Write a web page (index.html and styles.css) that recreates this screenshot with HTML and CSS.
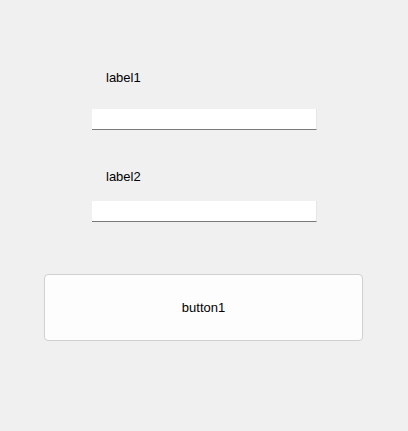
FILE: index.html
```html
<!DOCTYPE html>
<html>
<head>
<meta charset="utf-8">
<link rel="stylesheet" href="styles.css">
</head>
<body>
<div class="form">
  <div class="label label1">label1</div>
  <input class="textbox textbox1" type="text">
  <div class="label label2">label2</div>
  <input class="textbox textbox2" type="text">
  <button class="button">button1</button>
</div>
</body>
</html>
```
FILE: styles.css
```css
html, body {
  margin: 0;
  padding: 0;
  background: #f0f0f0;
  width: 408px;
  height: 431px;
  overflow: hidden;
}
.form {
  display: flex;
  flex-direction: column;
  align-items: flex-start;
  padding-top: 70px;
  font-family: "Liberation Sans", Arial, sans-serif;
  font-size: 13px;
  color: #000;
}
.label {
  line-height: 15px;
  height: 15px;
  margin-left: 106px;
}
.textbox {
  box-sizing: border-box;
  display: block;
  margin: 0 0 0 92px;
  width: 225px;
  height: 21px;
  padding: 0;
  background: #fff;
  border: none;
  border-right: 1px solid #e6e6e6;
  border-bottom: 1px solid #7a7a7a;
  outline: none;
}
.textbox1 { margin-top: 24px; }
.label2 { margin-top: 39px; }
.textbox2 { margin-top: 17px; }
.button {
  box-sizing: border-box;
  margin: 52px 0 0 44px;
  width: 319px;
  height: 67px;
  background: #fdfdfd;
  border: 1px solid #d0d0d0;
  border-radius: 4px;
  font-family: "Liberation Sans", Arial, sans-serif;
  font-size: 13px;
  color: #000;
  padding: 0;
}
```
